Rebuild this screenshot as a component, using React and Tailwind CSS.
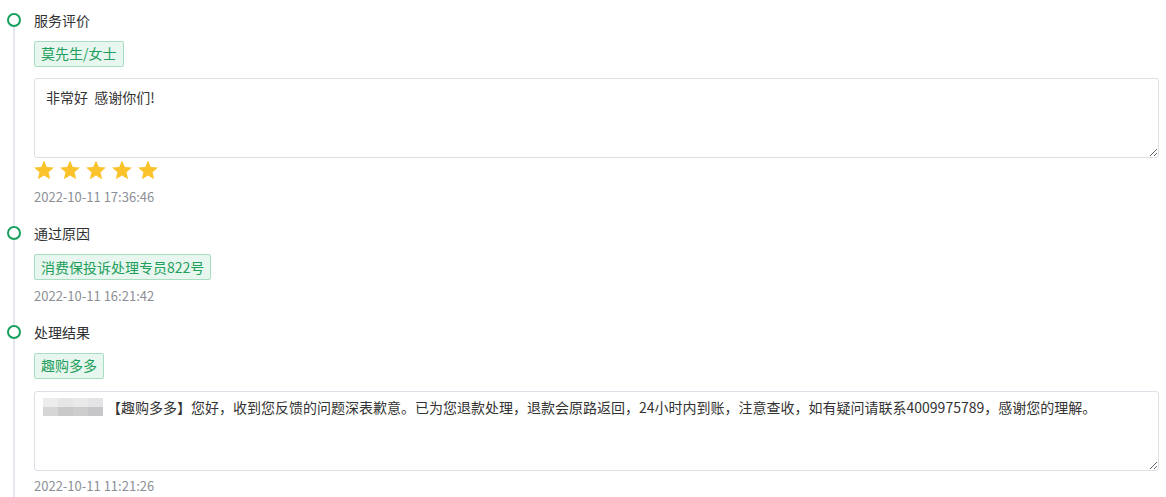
import React from 'react';

const font = { fontFamily: '"Noto Sans CJK SC", "Noto Sans", sans-serif' };

const Star = () => (
  <svg className="w-[22px] h-[22px]" viewBox="0 0 24 24" fill="#fac22b">
    <path d="M12 1.6l3.1 7.1 7.7.7-5.8 5.1 1.7 7.6L12 18.1l-6.7 4 1.7-7.6-5.8-5.1 7.7-.7z" />
  </svg>
);

const Tag = ({ children }) => (
  <span className="inline-flex items-center h-[26px] px-[6px] text-[14px] text-[#1f9e5c] bg-[#e7f6ee] border border-[#a9ddc2] rounded-[2px]">
    {children}
  </span>
);

const Node = ({ first }) => (
  <div className="w-[28px] shrink-0 flex flex-col items-center">
    <div className={first ? 'h-[3px]' : 'h-[3px] w-[2px] bg-[#e4e7ed]'}></div>
    <div className="w-[14px] h-[14px] rounded-full border-2 border-[#17a05d] bg-white shrink-0"></div>
    <div className="flex-1 w-[2px] bg-[#e4e7ed]"></div>
  </div>
);

const Time = ({ children, className }) => (
  <div className={`text-[13px] leading-[18px] text-[#8c8f96] ${className}`}>{children}</div>
);

const App = () => {
  return (
    <div className="w-[1166px] h-[497px] overflow-hidden bg-white pt-[10px]" style={font}>
      {/* 服务评价 */}
      <div className="flex">
        <Node first />
        <div className="flex-1 pl-[6px] pr-[7px] pb-[17px]">
          <div className="text-[14px] leading-[20px] text-[#303133]">服务评价</div>
          <div className="mt-[10px]">
            <Tag>莫先生/女士</Tag>
          </div>
          <textarea
            readOnly
            defaultValue="非常好  感谢你们!"
            className="mt-[11px] block w-full h-[80px] resize-y border border-[#dcdfe6] rounded-[3px] px-[11px] py-[8px] text-[14px] leading-[21px] text-[#333] outline-none"
            style={font}
          />
          <div className="mt-[1px] -ml-[1px] flex gap-[4px] h-[22px]">
            <Star />
            <Star />
            <Star />
            <Star />
            <Star />
          </div>
          <Time className="mt-[7px]">2022-10-11 17:36:46</Time>
        </div>
      </div>

      {/* 通过原因 */}
      <div className="flex">
        <Node />
        <div className="flex-1 pl-[6px] pr-[7px] pb-[17px]">
          <div className="text-[14px] leading-[20px] text-[#303133]">通过原因</div>
          <div className="mt-[11px]">
            <Tag>消费保投诉处理专员822号</Tag>
          </div>
          <Time className="mt-[7px]">2022-10-11 16:21:42</Time>
        </div>
      </div>

      {/* 处理结果 */}
      <div className="flex">
        <Node />
        <div className="flex-1 pl-[6px] pr-[7px] pb-[20px]">
          <div className="text-[14px] leading-[20px] text-[#303133]">处理结果</div>
          <div className="mt-[10px]">
            <Tag>趣购多多</Tag>
          </div>
          <div className="mt-[12px] h-[80px] resize-y overflow-auto border border-[#dcdfe6] rounded-[3px] px-[8px] py-[5px] text-[14px] leading-[21px] text-[#333]">
            <span className="inline-flex flex-col w-[60px] h-[18px] align-middle mr-[4px] -mt-[3px]">
              <span className="flex h-[9px]">
                <span className="flex-1 bg-[#ececec]"></span>
                <span className="flex-1 bg-[#e6e6e6]"></span>
                <span className="flex-1 bg-[#e9e9e9]"></span>
                <span className="flex-1 bg-[#e4e4e6]"></span>
              </span>
              <span className="flex h-[9px]">
                <span className="flex-1 bg-[#d6d6d6]"></span>
                <span className="flex-1 bg-[#c9c9c9]"></span>
                <span className="flex-1 bg-[#cdcdcd]"></span>
                <span className="flex-1 bg-[#c6c6c8]"></span>
              </span>
            </span>
            【趣购多多】您好，收到您反馈的问题深表歉意。已为您退款处理，退款会原路返回，24小时内到账，注意查收，如有疑问请联系4009975789，感谢您的理解。
          </div>
          <Time className="mt-[6px]">2022-10-11 11:21:26</Time>
        </div>
      </div>
    </div>
  );
};

export default App;
